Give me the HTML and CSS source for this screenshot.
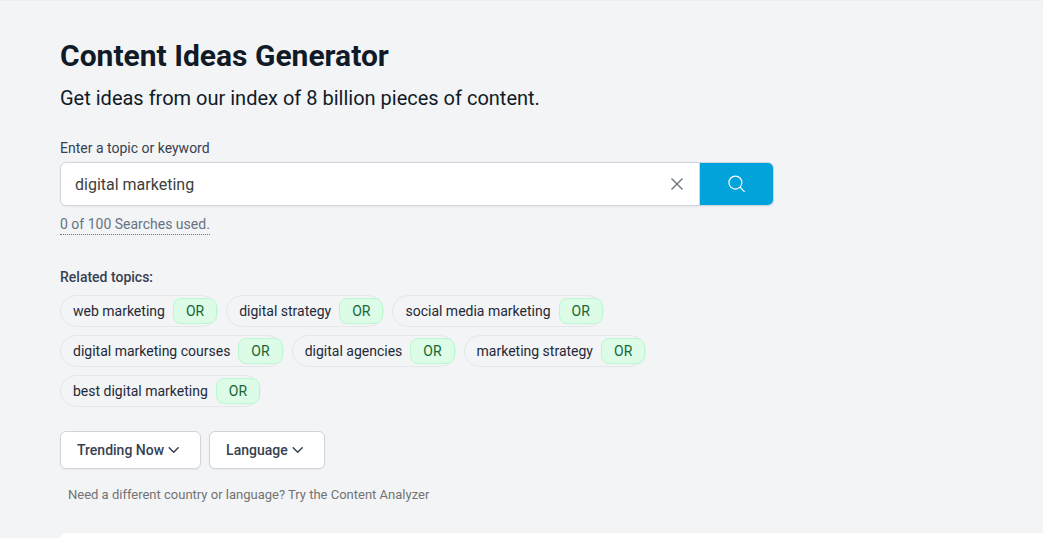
FILE: index.html
```html
<!DOCTYPE html>
<html lang="en">
<head>
    <meta charset="UTF-8">
    <meta name="viewport" content="width=device-width, initial-scale=1.0">
    <title>Content Ideas Generator</title>
    <link rel="stylesheet" href="styles.css">
</head>
<body>

<main class="page">
    <header>
        <h1>Content Ideas Generator</h1>
        <p class="subtitle">Get ideas from our index of 8 billion pieces of content.</p>
    </header>

    <form class="search">
        <label for="topic">Enter a topic or keyword</label>
        <div class="searchRow">
            <div class="searchField">
                <input type="text" id="topic" value="digital marketing">
                <button type="button" class="clearButton" aria-label="Clear">
                    <svg width="14" height="14" viewBox="0 0 14 14" fill="none" stroke="currentColor" stroke-width="1.4"><path d="M1.5 1.5l11 11M12.5 1.5l-11 11"/></svg>
                </button>
            </div>
            <button type="submit" class="searchButton" aria-label="Search">
                <svg width="18" height="18" viewBox="0 0 18 18" fill="none" stroke="currentColor" stroke-width="1.2"><circle cx="7.4" cy="7.6" r="6.5"/><path d="M12 12.2l4.6 4.6"/></svg>
            </button>
        </div>
        <span class="usage">0 of 100 Searches used.</span>
    </form>

    <section class="topics">
        <h2>Related topics:</h2>
        <ul class="topicList">
            <li class="topic">web marketing <button type="button">OR</button></li>
            <li class="topic">digital strategy <button type="button">OR</button></li>
            <li class="topic">social media marketing <button type="button">OR</button></li>
            <li class="topic">digital marketing courses <button type="button">OR</button></li>
            <li class="topic">digital agencies <button type="button">OR</button></li>
            <li class="topic">marketing strategy <button type="button">OR</button></li>
            <li class="topic">best digital marketing <button type="button">OR</button></li>
        </ul>
    </section>

    <div class="filters">
        <button type="button">Trending Now
            <svg width="12" height="12" viewBox="0 0 12 12" fill="none" stroke="currentColor" stroke-width="1.5" stroke-linecap="round" stroke-linejoin="round"><path d="M1.2 3.8L5.7 8.3l4.5-4.5"/></svg>
        </button>
        <button type="button">Language
            <svg width="12" height="12" viewBox="0 0 12 12" fill="none" stroke="currentColor" stroke-width="1.5" stroke-linecap="round" stroke-linejoin="round"><path d="M1.2 3.8L5.7 8.3l4.5-4.5"/></svg>
        </button>
    </div>
    <p class="note">Need a different country or language? Try the Content Analyzer</p>

    <section class="results"></section>
</main>

</body>
</html>
```

FILE: styles.css
```css
* {
    box-sizing: border-box;
}

body {
    font-family: Roboto, "Liberation Sans", sans-serif;
    font-size: 14px;
    line-height: 20px;
    background-color: #f2f4f6;
    color: #374151;
    margin: 0;
}

button,
input {
    font: inherit;
    color: inherit;
    margin: 0;
}

button {
    cursor: pointer;
}

svg {
    display: block;
}

.page {
    display: flex;
    flex-direction: column;
    min-height: 100vh;
    padding: 37px 0 0 60px;
    border-top: 1px solid #eceef1;
}

h1 {
    font-size: 30px;
    line-height: 36px;
    font-weight: 700;
    color: #111b27;
    margin: 0 0 10px;
}

.subtitle {
    font-size: 20px;
    line-height: 28px;
    color: #111b27;
    margin: 0;
}

/* Search box */
.search {
    max-width: 714px;
    margin-top: 26px;
}

.search label {
    display: block;
    margin-bottom: 4px;
}

.searchRow {
    display: flex;
    height: 44px;
    margin-bottom: 8px;
    border: 1px solid #d1d5db;
    border-radius: 6px;
    box-shadow: 0 1px 2px rgba(0, 0, 0, 0.05);
    background: #fff;
    overflow: hidden;
}

.searchField {
    display: flex;
    flex: 1;
    border-right: 1px solid #d1d5db;
}

.searchField input {
    flex: 1;
    min-width: 0;
    border: 0;
    padding: 2px 14px 0;
    font-size: 16px;
    color: #404040;
    background: none;
    outline: none;
}

.clearButton {
    border: 0;
    padding: 0 15px;
    background: none;
    color: #6b7280;
}

.searchButton {
    display: flex;
    align-items: center;
    justify-content: center;
    width: 73px;
    border: 0;
    padding: 0;
    background: #02a2db;
    color: #fff;
}

.usage {
    display: inline-block;
    color: #6b7280;
    border-bottom: 1px dotted #6b7280;
}

/* Related topics */
.topics {
    max-width: 714px;
    margin-top: 32px;
}

.topics h2 {
    font-size: 14px;
    line-height: 20px;
    font-weight: 500;
    margin: 0 0 8px;
}

.topicList {
    display: flex;
    flex-wrap: wrap;
    gap: 8px;
    list-style: none;
    margin: 0;
    padding: 0;
}

.topic {
    display: flex;
    align-items: center;
    gap: 8px;
    height: 32px;
    padding-left: 12px;
    border: 1px solid #e5e7eb;
    border-radius: 16px;
    color: #1f2937;
}

.topic button {
    height: 26px;
    padding: 0 12px;
    border: 1px solid #bbf7d0;
    border-radius: 8px;
    background: #dcfce7;
    color: #166534;
}

/* Filters */
.filters {
    display: flex;
    gap: 8px;
    margin-top: 24px;
}

.filters button {
    display: flex;
    align-items: center;
    gap: 4px;
    height: 38px;
    padding: 0 20px 0 16px;
    border: 1px solid #d1d5db;
    border-radius: 6px;
    box-shadow: 0 1px 2px rgba(0, 0, 0, 0.05);
    background: #fff;
    font-weight: 500;
}

.note {
    font-size: 13px;
    color: #737373;
    margin: 16px 0 28px;
    padding-left: 8px;
}

.results {
    flex: 1;
    background: #fff;
    border-radius: 8px 0 0 0;
    box-shadow: 0 1px 3px rgba(0, 0, 0, 0.1);
}
```
